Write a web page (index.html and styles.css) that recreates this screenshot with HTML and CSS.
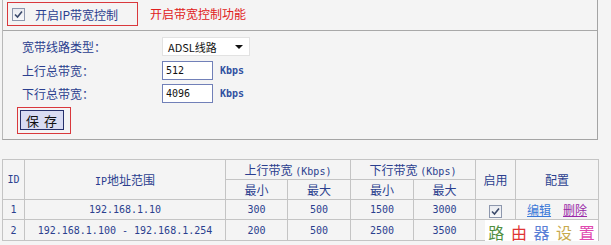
FILE: index.html
```html
<!DOCTYPE html>
<html lang="zh-CN">
<head>
  <meta charset="UTF-8">
  <title>IP带宽控制</title>
  <link rel="stylesheet" href="styles.css">
</head>
<body>
  <div class="panel">
    <div class="panel-head">
      <label class="mark-box">
        <span class="check"><svg viewBox="0 0 9 9" width="9" height="9"><path d="M1 4.5 L3.5 7 L8 1.5" fill="none" stroke="#3b4a6b" stroke-width="1.6"/></svg></span>
        开启IP带宽控制
      </label>
      <span class="hint">开启带宽控制功能</span>
    </div>
    <div class="panel-body">
      <div class="row">
        <span class="label">宽带线路类型：</span>
        <div class="select"><span>ADSL线路</span><span class="arrow"></span></div>
      </div>
      <div class="row">
        <span class="label">上行总带宽：</span>
        <div class="field mono">512</div>
        <span class="unit">Kbps</span>
      </div>
      <div class="row">
        <span class="label">下行总带宽：</span>
        <div class="field mono">4096</div>
        <span class="unit">Kbps</span>
      </div>
      <div class="save-mark">
        <button class="save">保&nbsp;存</button>
      </div>
    </div>
  </div>

  <div class="table-wrap">
    <table class="rules">
      <colgroup>
        <col style="width:22px"><col style="width:201px"><col style="width:62px"><col style="width:63px">
        <col style="width:63px"><col style="width:62px"><col style="width:40px"><col style="width:83px">
      </colgroup>
      <thead>
        <tr>
          <th rowspan="2" class="mono">ID</th>
          <th rowspan="2"><span class="mono">IP</span>地址范围</th>
          <th colspan="2">上行带宽 <span class="mono">(Kbps)</span></th>
          <th colspan="2">下行带宽 <span class="mono">(Kbps)</span></th>
          <th rowspan="2">启用</th>
          <th rowspan="2">配置</th>
        </tr>
        <tr>
          <th>最小</th><th>最大</th><th>最小</th><th>最大</th>
        </tr>
      </thead>
      <tbody>
        <tr>
          <td class="mono">1</td>
          <td class="mono">192.168.1.10</td>
          <td class="mono">300</td><td class="mono">500</td>
          <td class="mono">1500</td><td class="mono">3000</td>
          <td><span class="check small"><svg viewBox="0 0 9 9" width="9" height="9"><path d="M1 4.5 L3.5 7 L8 1.5" fill="none" stroke="#3b4a6b" stroke-width="1.6"/></svg></span></td>
          <td><a class="edit" href="#">编辑</a><a class="remove" href="#">删除</a></td>
        </tr>
        <tr>
          <td class="mono">2</td>
          <td class="mono">192.168.1.100 - 192.168.1.254</td>
          <td class="mono">200</td><td class="mono">500</td>
          <td class="mono">2500</td><td class="mono">3500</td>
          <td></td>
          <td></td>
        </tr>
      </tbody>
    </table>
    <div class="watermark">
      <span class="w1">路</span><span class="w2">由</span><span class="w3">器</span><span class="w4">设</span><span class="w5">置</span>
    </div>
  </div>
</body>
</html>
```

FILE: styles.css
```css
body {
  margin: 0;
  background: #f4f4f4;
  font-family: "Noto Sans CJK SC", sans-serif;
  font-size: 12px;
  color: #2b3f8f;
}

.mono {
  font-family: "DejaVu Sans Mono", "Noto Sans CJK SC", monospace;
  font-size: 10px;
}

.panel {
  margin-left: 2px;
  width: 594px;
  border-left: 1px solid #b8b8b8;
  border-right: 1px solid #a4a4a4;
  border-bottom: 1px solid #a4a4a4;
}

.panel-head {
  height: 31px;
  box-sizing: border-box;
  border-bottom: 1px solid #a8a8a8;
  padding: 2px 0 0 4px;
  display: flex;
  align-items: flex-start;
}

.mark-box {
  display: flex;
  align-items: center;
  width: 131px;
  height: 24px;
  box-sizing: border-box;
  border: 1px solid #d9383c;
  padding-left: 4px;
  color: #2b3f8f;
  gap: 10px;
}

.check {
  display: inline-flex;
  align-items: center;
  justify-content: center;
  width: 11px;
  height: 11px;
  border: 1px solid #8d97ad;
  background: linear-gradient(#e9ebf0, #f8f8fa);
}

.hint {
  margin-left: 12px;
  line-height: 24px;
  color: #e02020;
}

.panel-body {
  padding: 6px 0 5px 14px;
}

.row {
  display: flex;
  align-items: center;
  height: 19px;
  margin-bottom: 5px;
}

.row:nth-child(2) {
  margin-bottom: 4px;
}

.label {
  width: 145px;
  box-sizing: border-box;
  padding-left: 5px;
}

.select {
  width: 88px;
  height: 19px;
  box-sizing: border-box;
  background: #fff;
  border: 1px solid #e2e2e2;
  display: flex;
  align-items: center;
  justify-content: space-between;
  padding: 0 6px 0 5px;
  color: #111;
  font-size: 11px;
}

.arrow {
  width: 0;
  height: 0;
  border-left: 4px solid transparent;
  border-right: 4px solid transparent;
  border-top: 4px solid #111;
}

.field {
  width: 51px;
  height: 19px;
  box-sizing: border-box;
  background: #fff;
  border: 1px solid #7180b8;
  padding-left: 3px;
  line-height: 17px;
  color: #111;
}

.unit {
  margin-left: 7px;
  font-family: "DejaVu Sans Mono", monospace;
  font-size: 10px;
  font-weight: bold;
  color: #3050a0;
}

.save-mark {
  display: inline-block;
  border: 1px solid #d9383c;
  padding: 2px 6px 3px 2px;
  margin-top: -1px;
}

.save {
  display: block;
  width: 44px;
  height: 20px;
  box-sizing: border-box;
  padding: 0;
  border: 1px solid #26306a;
  background: #d9dcf3;
  font-family: "Noto Sans CJK SC", sans-serif;
  font-size: 13px;
  line-height: 17px;
  letter-spacing: 1px;
  color: #111;
}

.table-wrap {
  position: relative;
  margin: 19px 0 0 2px;
  width: 596px;
}

.rules {
  width: 596px;
  border-collapse: collapse;
  table-layout: fixed;
}

.rules th,
.rules td {
  border: 1px solid #c4c4c4;
  padding: 0;
  height: 19px;
  text-align: center;
  font-weight: normal;
  color: #2b3f8f;
  white-space: nowrap;
}

.rules tbody tr:last-child td {
  height: 20px;
}

.rules td .check.small {
  vertical-align: middle;
}

.edit,
.remove {
  margin: 0 6px;
  text-decoration: underline;
}

.edit {
  color: #3a78d8;
}

.remove {
  color: #9a2aa8;
}

.watermark {
  position: absolute;
  left: 483px;
  top: 61px;
  width: 113px;
  height: 23px;
  background: #fff;
  display: flex;
  align-items: center;
  justify-content: space-around;
  font-family: "Noto Sans CJK SC", serif;
  font-size: 16px;
  line-height: 1;
}

.w1 { color: #4f8f3f; }
.w2 { color: #e03434; }
.w3 { color: #5b7fd6; }
.w4 { color: #c8aa4c; }
.w5 { color: #e04ab0; }
```
